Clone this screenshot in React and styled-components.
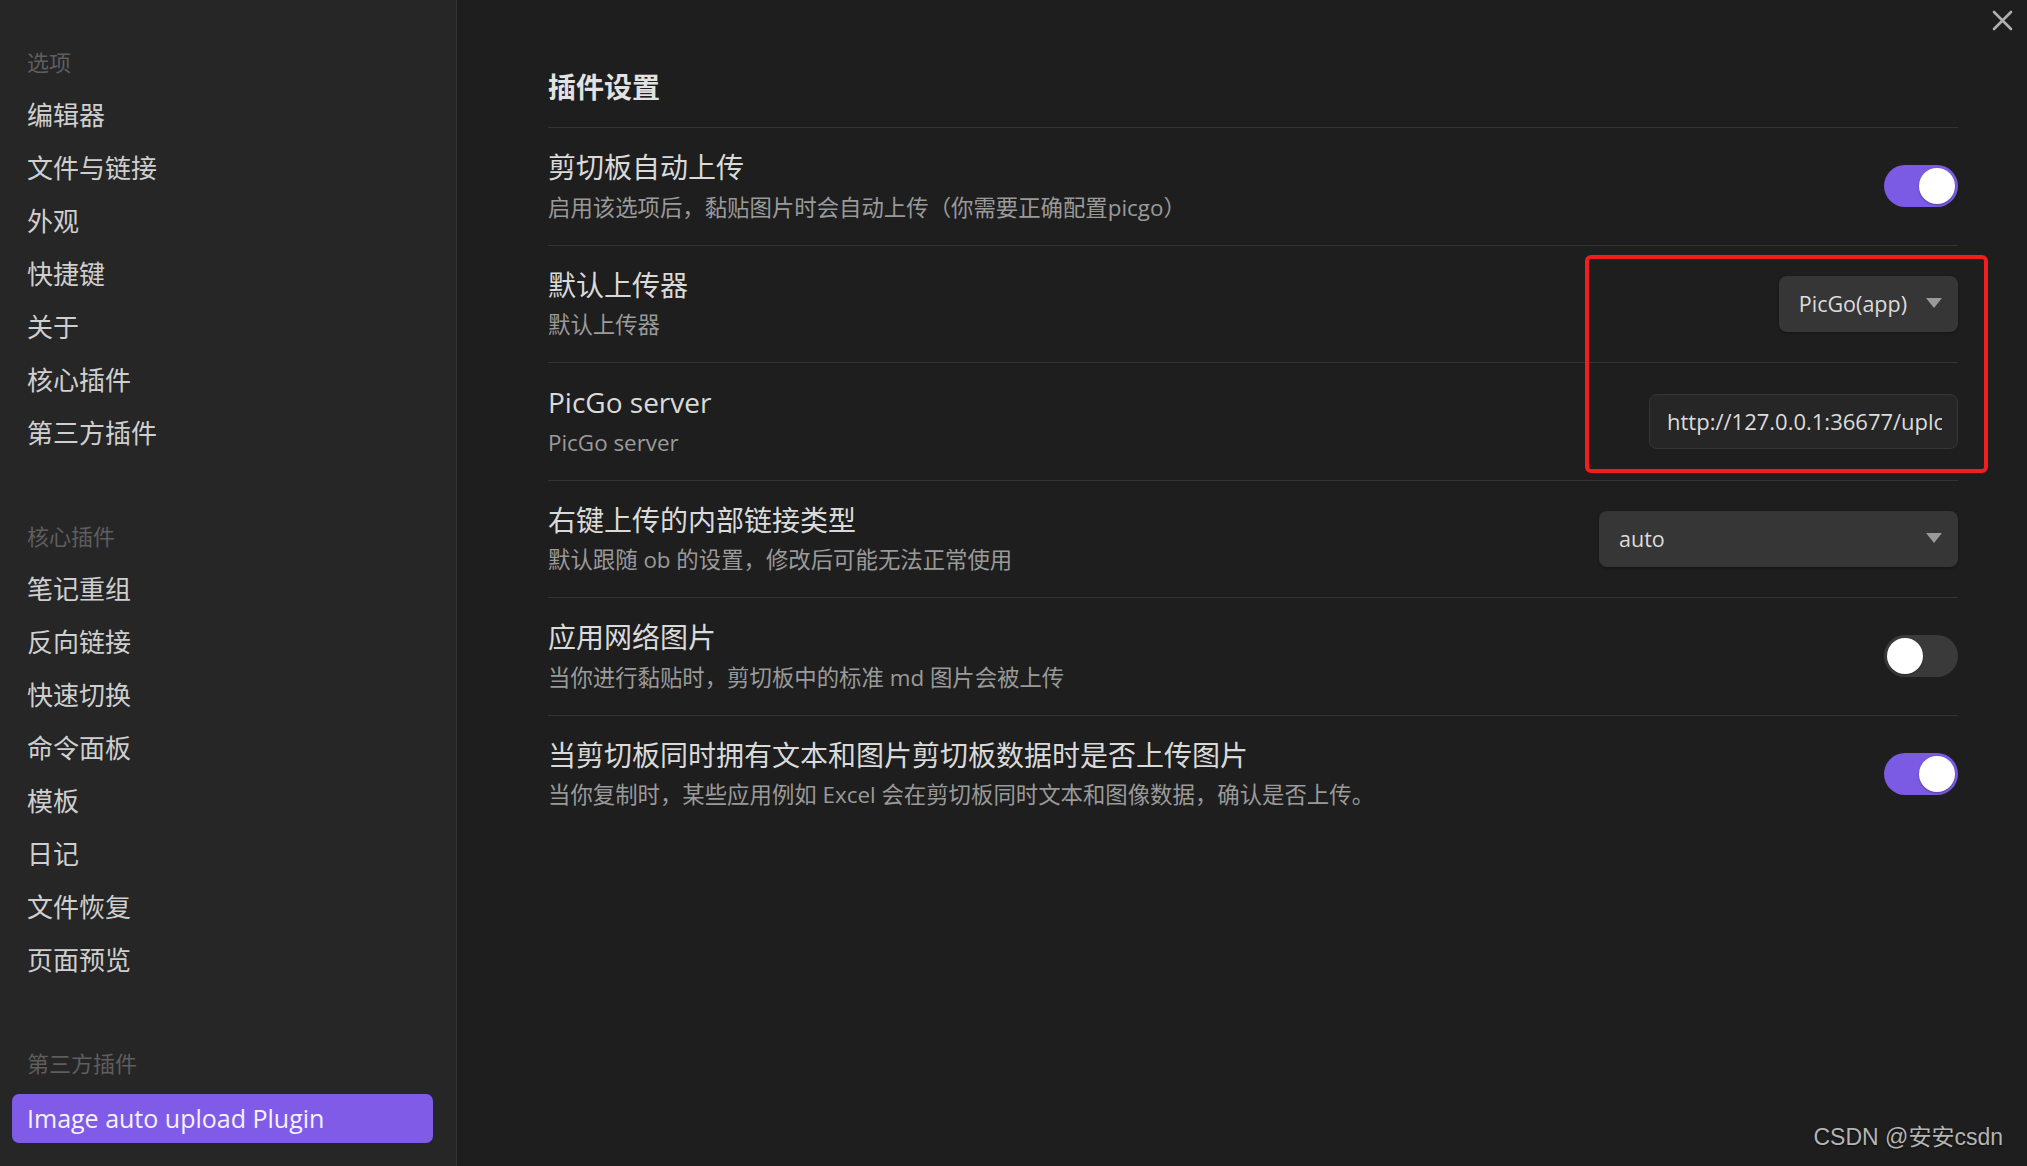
import styled, { createGlobalStyle } from 'styled-components';

const GlobalStyle = createGlobalStyle`
  html, body {
    margin: 0;
    height: 100%;
    background: #1e1e1e;
    overflow: hidden;
  }
  body {
    font-family: "Open Sans", "Noto Sans CJK SC", sans-serif;
  }
  * {
    box-sizing: border-box;
  }
`;

// Layout
const Shell = styled.div`
  display: flex;
  height: 100vh;
  position: relative;
`;

const Sidebar = styled.nav`
  width: 457px;
  flex-shrink: 0;
  background: #262626;
  border-right: 1px solid #333;
  padding: 35.5px 23px 0 27px;
`;

const NavSection = styled.div`
  & + & {
    margin-top: 50px;
  }
`;

const NavTitle = styled.div`
  height: 53px;
  line-height: 53px;
  font-size: 22px;
  color: #5e5e5e;
`;

const NavItem = styled.div`
  height: ${(p) => (p.$active ? '49px' : '53px')};
  line-height: ${(p) => (p.$active ? '49px' : '53px')};
  font-size: ${(p) => (p.$active ? '25px' : '26px')};
  color: ${(p) => (p.$active ? '#f4f2ff' : '#cfcfcf')};
  white-space: nowrap;
  ${(p) =>
    p.$active &&
    `
    background: #7f5be8;
    border-radius: 7px;
    margin: 4px 0 0 -15px;
    padding-left: 15px;
  `}
`;

const Main = styled.main`
  flex: 1;
  padding: 67px 69px 0 91px;
`;

const Heading = styled.h2`
  margin: 0 0 20px;
  height: 40px;
  line-height: 40px;
  font-size: 28px;
  font-weight: 700;
  color: #e2e2e2;
`;

const SettingRow = styled.div`
  display: flex;
  align-items: center;
  justify-content: space-between;
  border-top: 1px solid #333;
  padding: 20px 0;
`;

const SettingInfo = styled.div`
  display: flex;
  flex-direction: column;
  gap: 4.5px;
`;

const SettingName = styled.div`
  font-size: 28px;
  line-height: 38px;
  color: #dadada;
`;

const SettingDesc = styled.div`
  font-size: 22.4px;
  line-height: 34px;
  color: #9a9a9a;
`;

const Toggle = styled.div`
  width: 74px;
  height: 42px;
  border-radius: 21px;
  padding: 3px;
  display: flex;
  justify-content: ${(p) => (p.$on ? 'flex-end' : 'flex-start')};
  background: ${(p) => (p.$on ? '#7b5ae4' : '#3a3a3a')};
`;

const Knob = styled.div`
  width: 36px;
  height: 36px;
  border-radius: 50%;
  background: #fff;
  box-shadow: 0 1px 2px rgba(0, 0, 0, 0.3);
`;

const Dropdown = styled.div`
  width: ${(p) => p.$width || 'auto'};
  height: 56px;
  display: flex;
  align-items: center;
  justify-content: space-between;
  gap: 19px;
  padding: 0 16px 0 20px;
  background: #363636;
  border-radius: 8px;
  box-shadow: 0 1px 3px rgba(0, 0, 0, 0.35);
  font-size: 21.5px;
  color: #dcdcdc;
`;

const Caret = styled.span`
  width: 0;
  height: 0;
  border-left: 8.5px solid transparent;
  border-right: 8.5px solid transparent;
  border-top: 10px solid #9a9a9a;
  margin-top: -2px;
`;

const TextInput = styled.input`
  width: 309px;
  height: 55px;
  padding: 0 15px 0 17px;
  background: #262626;
  border: 1px solid #353535;
  border-radius: 8px;
  font-family: inherit;
  font-size: 22px;
  color: #dcdcdc;
  outline: none;
`;

const Highlight = styled.div`
  position: absolute;
  top: 255px;
  left: 1585px;
  width: 403px;
  height: 218px;
  border: 4px solid #f21d1d;
  border-radius: 6px;
  pointer-events: none;
`;

const CloseButton = styled.div`
  position: absolute;
  top: 10px;
  right: 14px;
  width: 21px;
  height: 21px;
  color: #b0b0b0;
`;

const Watermark = styled.div`
  position: absolute;
  right: 24px;
  bottom: 14px;
  font-family: "Liberation Sans", "Noto Sans CJK SC", sans-serif;
  font-size: 23px;
  color: #b4b4b4;
  text-shadow: 0 1px 2px rgba(0, 0, 0, 0.6);
`;

const navSections = [
  {
    title: '选项',
    items: ['编辑器', '文件与链接', '外观', '快捷键', '关于', '核心插件', '第三方插件'],
  },
  {
    title: '核心插件',
    items: ['笔记重组', '反向链接', '快速切换', '命令面板', '模板', '日记', '文件恢复', '页面预览'],
  },
  {
    title: '第三方插件',
    items: ['Image auto upload Plugin'],
    active: 'Image auto upload Plugin',
  },
];

const settings = [
  {
    name: '剪切板自动上传',
    desc: '启用该选项后，黏贴图片时会自动上传（你需要正确配置picgo）',
    control: { type: 'toggle', on: true },
  },
  {
    name: '默认上传器',
    desc: '默认上传器',
    control: { type: 'select', value: 'PicGo(app)' },
  },
  {
    name: 'PicGo server',
    desc: 'PicGo server',
    control: { type: 'input', value: 'http://127.0.0.1:36677/upload' },
  },
  {
    name: '右键上传的内部链接类型',
    desc: '默认跟随 ob 的设置，修改后可能无法正常使用',
    control: { type: 'select', value: 'auto', width: '359px' },
  },
  {
    name: '应用网络图片',
    desc: '当你进行黏贴时，剪切板中的标准 md 图片会被上传',
    control: { type: 'toggle', on: false },
  },
  {
    name: '当剪切板同时拥有文本和图片剪切板数据时是否上传图片',
    desc: '当你复制时，某些应用例如 Excel 会在剪切板同时文本和图像数据，确认是否上传。',
    control: { type: 'toggle', on: true },
  },
];

const Control = ({ control }) => {
  if (control.type === 'toggle') {
    return (
      <Toggle $on={control.on}>
        <Knob />
      </Toggle>
    );
  }
  if (control.type === 'select') {
    return (
      <Dropdown $width={control.width}>
        <span>{control.value}</span>
        <Caret />
      </Dropdown>
    );
  }
  return <TextInput type="text" value={control.value} readOnly />;
};

const App = () => {
  return (
    <Shell>
      <GlobalStyle />
      <Sidebar>
        {navSections.map((section) => (
          <NavSection key={section.title}>
            <NavTitle>{section.title}</NavTitle>
            {section.items.map((item) => (
              <NavItem key={item} $active={item === section.active}>
                {item}
              </NavItem>
            ))}
          </NavSection>
        ))}
      </Sidebar>
      <Main>
        <Heading>插件设置</Heading>
        {settings.map((s) => (
          <SettingRow key={s.name}>
            <SettingInfo>
              <SettingName>{s.name}</SettingName>
              <SettingDesc>{s.desc}</SettingDesc>
            </SettingInfo>
            <Control control={s.control} />
          </SettingRow>
        ))}
      </Main>
      <Highlight />
      <CloseButton>
        <svg viewBox="0 0 21 21" width="21" height="21">
          <path
            d="M2 2 L19 19 M19 2 L2 19"
            stroke="currentColor"
            strokeWidth="2.6"
            strokeLinecap="round"
          />
        </svg>
      </CloseButton>
      <Watermark>CSDN @安安csdn</Watermark>
    </Shell>
  );
};

export default App;
